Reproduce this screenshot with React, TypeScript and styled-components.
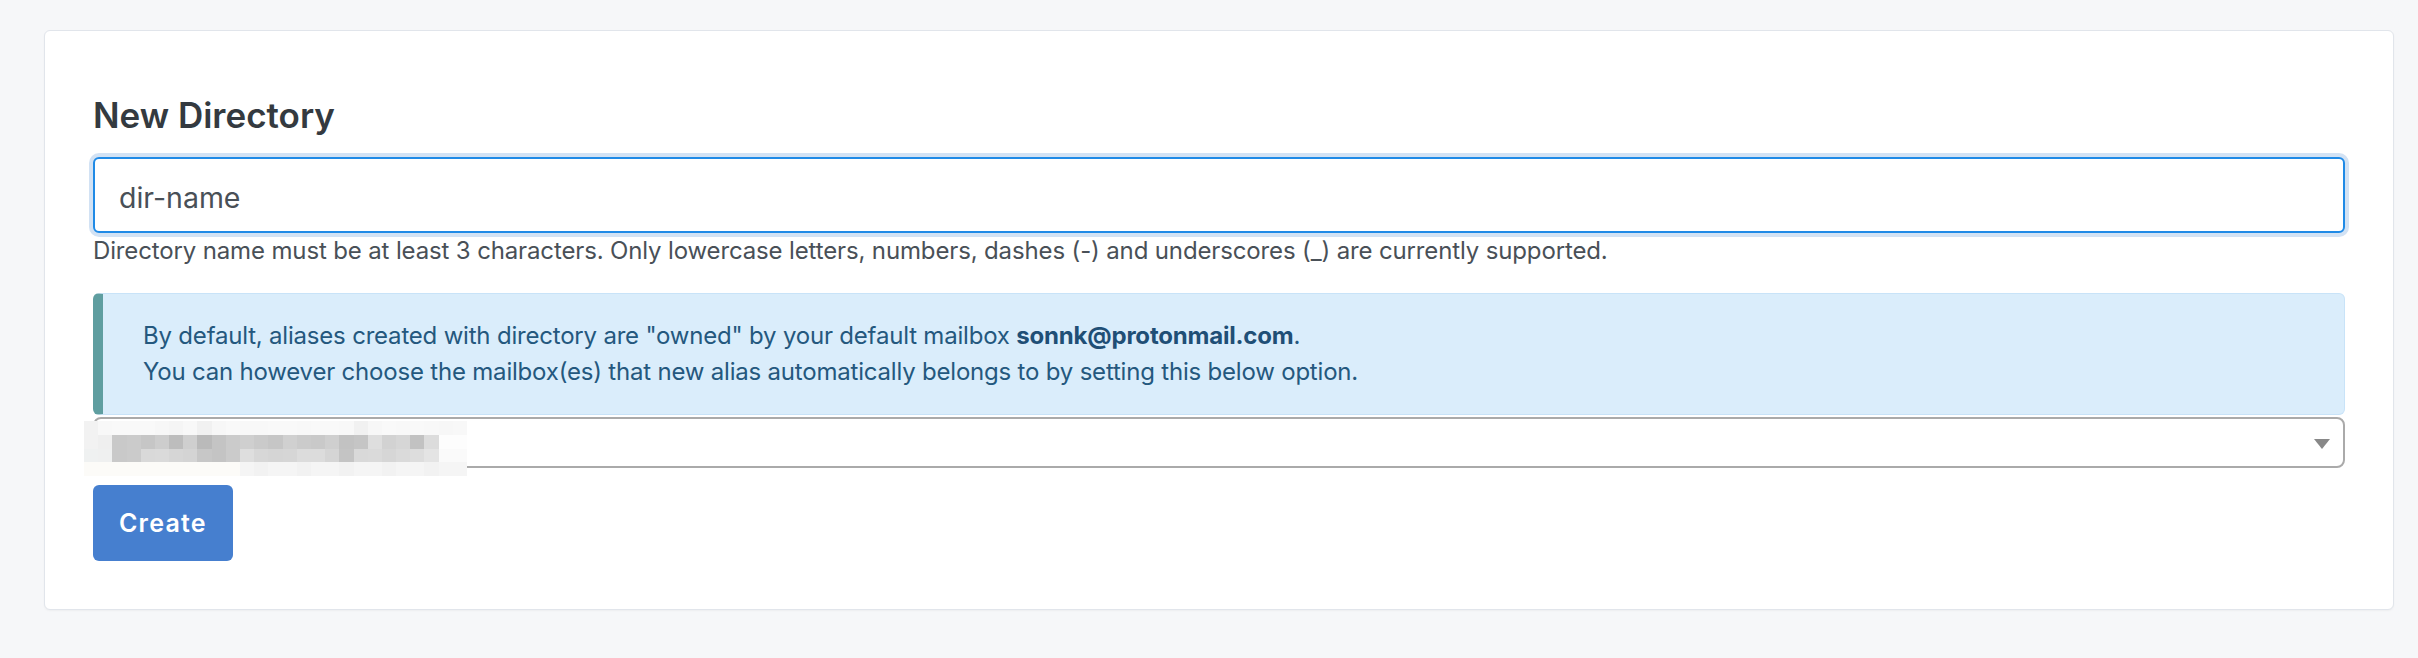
import React from "react";
import styled, { createGlobalStyle } from "styled-components";

const GlobalStyle = createGlobalStyle`
  html, body {
    margin: 0;
    padding: 0;
    background: #f6f7f9;
  }
  body {
    font-family: Inter, "Noto Sans", "Liberation Sans", sans-serif;
    -webkit-font-smoothing: antialiased;
  }
  * { box-sizing: border-box; }
`;

const Page = styled.div`
  padding: 30px 24px 48px 44px;
`;

const Card = styled.section`
  background: #ffffff;
  border: 1px solid #e1e5eb;
  border-radius: 6px;
  box-shadow: 0 1px 2px rgba(0, 0, 0, 0.04);
  padding: 63px 48px 48px;
  display: flex;
  flex-direction: column;
`;

const Title = styled.h3`
  margin: 0 0 21px;
  font-size: 35px;
  line-height: 42px;
  font-weight: 600;
  color: #343a40;
`;

const TextInput = styled.input`
  display: block;
  width: 100%;
  height: 76px;
  margin: 0;
  padding: 4px 24px 0;
  font-family: inherit;
  font-size: 28.5px;
  color: #495057;
  background: #ffffff;
  border: 2px solid #1f8ae6;
  border-radius: 6px;
  outline: none;
  box-shadow: 0 0 0 4px #d2e2f4;
`;

const HelpText = styled.small`
  display: block;
  font-size: 24px;
  line-height: 36px;
  letter-spacing: -0.14px;
  color: #495057;
`;

const Alert = styled.div`
  margin: 24px 0 2px;
  padding: 24px 40px;
  background: #daedfb;
  border: 1px solid #c8e3f8;
  border-left: 10px solid #5f9ea0;
  border-radius: 6px;
  color: #24587e;
  font-size: 24px;
  line-height: 36px;
  letter-spacing: -0.2px;
`;

const Strong = styled.strong`
  font-weight: 700;
  color: #1f4f76;
`;

const SelectWrap = styled.div`
  position: relative;
`;

const SelectBox = styled.div`
  height: 51px;
  border: 2px solid #aaaaaa;
  border-radius: 8px;
  background: #ffffff;
  display: flex;
  align-items: center;
  justify-content: flex-end;
  padding-right: 13px;
`;

const Arrow = styled.span`
  width: 0;
  height: 0;
  border-style: solid;
  border-width: 10px 8px 0 8px;
  border-color: #888888 transparent transparent transparent;
  margin-top: 2px;
`;

const Mosaic = styled.div`
  position: absolute;
  left: -9px;
  top: 4px;
  width: 383px;
  height: 55px;
  display: grid;
  grid-template-columns: repeat(27, 1fr);
  grid-template-rows: repeat(4, 1fr);
`;

const Cell = styled.span<{ $c: string }>`
  background: ${(p) => p.$c};
`;

const Actions = styled.div`
  margin-top: 17px;
  display: flex;
`;

const Button = styled.button`
  height: 76px;
  padding: 0 26px;
  background: #467fcf;
  color: #ffffff;
  border: none;
  border-radius: 6px;
  font-family: inherit;
  font-size: 25px;
  font-weight: 600;
  letter-spacing: 1.2px;
  cursor: pointer;
`;

const row1 = [
  "#f2f2f2", "#f8f8f8", "#f9f9f9", "#f9f9f9", "#f9f9f9", "#f7f7f7", "#f5f5f5", "#f8f8f8", "#f1f1f1",
  "#f7f7f7", "#f9f9f9", "#f8f8f8", "#f8f8f8", "#f9f9f9", "#f9f9f9", "#f8f8f8", "#f9f9f9", "#f9f9f9",
  "#f8f8f8", "#f1f1f1", "#f7f7f7", "#f9f9f9", "#f8f8f8", "#f9f9f9", "#f8f8f8", "#f7f7f7", "#f8f8f8",
];
const row2 = [
  "#f2f2f2", "#efefef", "#c9c9c9", "#cbcbcb", "#c6c6c6", "#cdcdcd", "#bdbdbd", "#cfcfcf", "#bababa",
  "#c4c4c4", "#cbcbcb", "#cfcfcf", "#cacaca", "#c6c6c6", "#d0d0d0", "#cbcbcb", "#c9c9c9", "#cfcfcf",
  "#c2c2c2", "#c5c5c5", "#dedede", "#d2d2d2", "#d6d6d6", "#c2c2c2", "#dcdcdc", "#fdfdfd", "#fdfdfd",
];
const row3 = [
  "#eff1f1", "#eff0f0", "#c9c9c9", "#cbcbcb", "#d9d9d9", "#dadada", "#d6d6d6", "#d4d4d4", "#c7c7c7",
  "#c4c4c4", "#cbcbcb", "#dedede", "#d7d7d7", "#d5d5d5", "#d6d6d6", "#dcdcdc", "#dcdcdc", "#d5d5d5",
  "#c4c4c4", "#d9d9d9", "#dadada", "#d6d6d6", "#dadada", "#dddddd", "#e4e4e4", "#fafafa", "#fafafa",
];
const row4 = Array.from({ length: 27 }, (_, i) => (i < 11 ? "#fcfbf8" : i % 3 === 0 ? "#f2f2f2" : "#f5f5f5"));
const mosaic = [...row1, ...row2, ...row3, ...row4];

export default function App() {
  return (
    <>
      <GlobalStyle />
      <Page>
        <Card>
          <Title>New Directory</Title>
          <TextInput defaultValue="dir-name" />
          <HelpText>
            Directory name must be at least 3 characters. Only lowercase letters, numbers, dashes (-) and
            underscores (_) are currently supported.
          </HelpText>
          <Alert>
            By default, aliases created with directory are "owned" by your default mailbox{" "}
            <Strong>sonnk@protonmail.com</Strong>.
            <br />
            You can however choose the mailbox(es) that new alias automatically belongs to by setting this below
            option.
          </Alert>
          <SelectWrap>
            <SelectBox>
              <Arrow />
            </SelectBox>
            <Mosaic aria-hidden>
              {mosaic.map((c, i) => (
                <Cell key={i} $c={c} />
              ))}
            </Mosaic>
          </SelectWrap>
          <Actions>
            <Button type="button">Create</Button>
          </Actions>
        </Card>
      </Page>
    </>
  );
}
